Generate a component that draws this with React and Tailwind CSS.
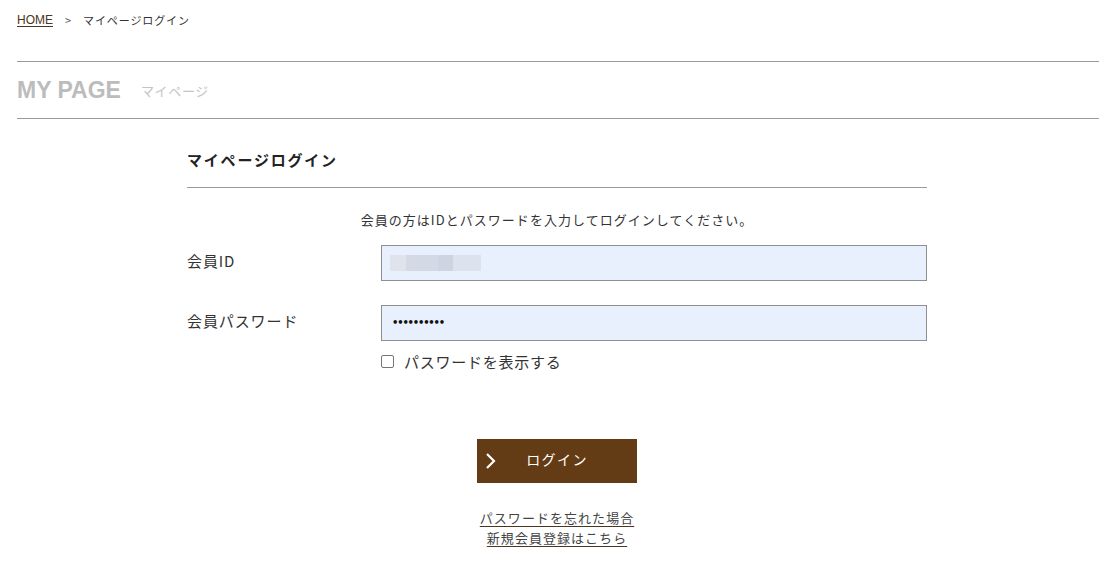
import { useState } from 'react'

const font = { fontFamily: '"Noto Sans CJK JP", "Noto Sans", sans-serif' }

function Field({ label, children }) {
  return (
    <div className="flex items-center">
      <div className="w-[194px] pb-[6px] text-[15px] leading-none text-[#333] tracking-[0.06em]">{label}</div>
      <div className="flex-1">{children}</div>
    </div>
  )
}

export default function App() {
  const [show, setShow] = useState(false)

  return (
    <div className="min-h-[576px] bg-white px-[17px] text-[#333]" style={font}>
      {/* Breadcrumb */}
      <div className="flex h-[41px] items-center gap-[12px] pb-[1px] text-[11px] leading-none">
        <a href="#" className="text-[12px] text-[#4a3520] underline underline-offset-2" style={{ fontFamily: '"Liberation Sans", Arial, sans-serif' }}>HOME</a>
        <span className="text-[#555]">&gt;</span>
        <span className="tracking-[0.08em] text-[#333]">マイページログイン</span>
      </div>

      {/* Page heading */}
      <div className="mt-[20px] flex h-[58px] items-center gap-[20px] border-y border-[#9a9a9a]">
        <h1 className="text-[23px] font-bold leading-none text-[#bcbcbc]" style={{ fontFamily: '"Liberation Sans", Arial, sans-serif' }}>MY PAGE</h1>
        <span className="mt-[2px] text-[13px] tracking-[0.05em] text-[#c4c4c4]">マイページ</span>
      </div>

      {/* Login box */}
      <div className="ml-[170px] mt-[33px] w-[740px]">
        <h2 className="pb-[20px] text-[15px] font-bold leading-none tracking-[0.12em] text-[#222]">マイページログイン</h2>
        <div className="border-t border-[#9a9a9a]" />

        <p className="mt-[25px] text-center text-[13px] leading-none tracking-[0.08em] text-[#333]">
          会員の方はIDとパスワードを入力してログインしてください。
        </p>

        <div className="mt-[19px] flex flex-col gap-[24px]">
          <Field label="会員ID">
            <div className="flex h-[36px] items-center border border-[#8f8f8f] bg-[#e8f0fe] px-[8px]">
              <div className="flex h-[16px]">
                <div className="w-[16px] bg-[#dfe4ec]" />
                <div className="w-[32px] bg-[#d3dae6]" />
                <div className="w-[15px] bg-[#cdd4e2]" />
                <div className="w-[28px] bg-[#dde3ee]" />
              </div>
            </div>
          </Field>
          <Field label="会員パスワード">
            <div className="flex h-[36px] items-center border border-[#8f8f8f] bg-[#e8f0fe] px-[10px]">
              <span className="text-[10px] font-bold leading-none tracking-[-0.12em] text-[#111]" style={{ fontFamily: '"DejaVu Sans", sans-serif' }}>
                {show ? 'password123' : '••••••••••'}
              </span>
            </div>
          </Field>
        </div>

        <label className="ml-[194px] mt-[13px] flex w-fit cursor-pointer items-center gap-[10px] text-[15px] leading-none tracking-[0.05em] text-[#333]">
          <input
            type="checkbox"
            checked={show}
            onChange={e => setShow(e.target.checked)}
            className="h-[13px] w-[13px] appearance-none rounded-[2px] border border-[#767676] bg-white"
          />
          パスワードを表示する
        </label>

        <div className="mt-[70px] flex justify-center">
          <button className="relative flex h-[44px] w-[160px] items-center justify-center bg-[#633b14] pb-[4px] text-[14px] tracking-[0.1em] text-white">
            <svg className="absolute left-[8px] top-1/2 -translate-y-1/2" width="12" height="18" viewBox="0 0 12 18" fill="none">
              <path d="M2 2 L9 9 L2 16" stroke="white" strokeWidth="2.2" />
            </svg>
            ログイン
          </button>
        </div>

        <div className="mt-[28px] flex flex-col items-center gap-[7px] text-[13px] leading-none tracking-[0.08em]">
          <a href="#" className="text-[#444] underline decoration-[#4a3520] underline-offset-[3px]">パスワードを忘れた場合</a>
          <a href="#" className="text-[#444] underline decoration-[#4a3520] underline-offset-[3px]">新規会員登録はこちら</a>
        </div>
      </div>
    </div>
  )
}
